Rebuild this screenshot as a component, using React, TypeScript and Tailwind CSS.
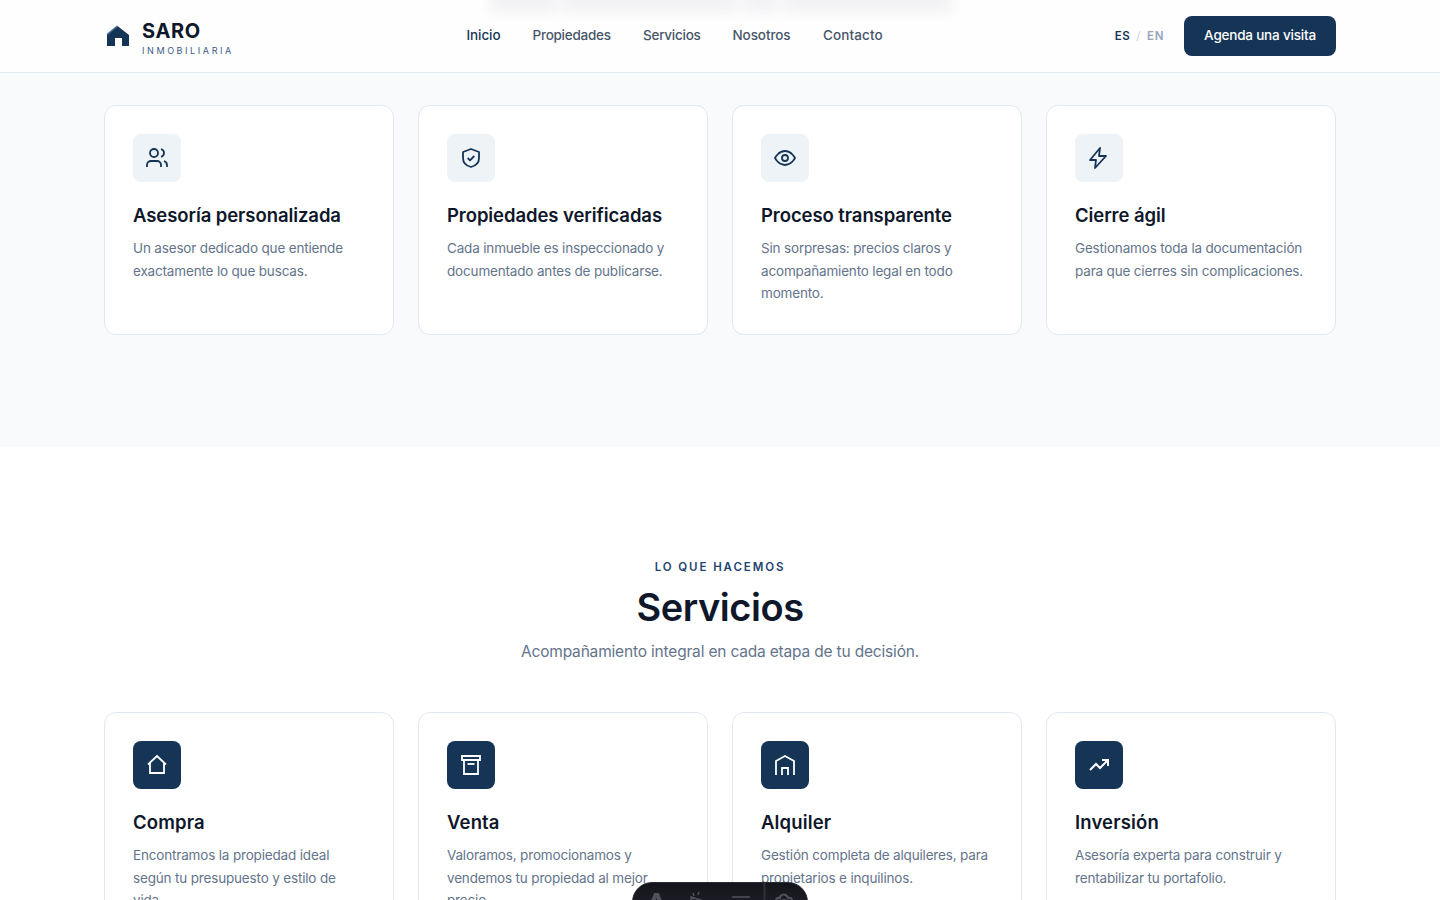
import React from "react";

const NAV = [
  { label: "Inicio", style: "w-[34px] text-[#163456]" },
  { label: "Propiedades", style: "w-[78.5px] tracking-[-0.25px] text-[#475569]" },
  { label: "Servicios", style: "w-[57.5px] tracking-[-0.25px] text-[#475569]" },
  { label: "Nosotros", style: "w-[58.5px] text-[#475569]" },
  { label: "Contacto", style: "tracking-[0.1px] text-[#475569]" },
];

const iconProps = {
  width: 24,
  height: 24,
  viewBox: "0 0 24 24",
  fill: "none",
  stroke: "currentColor",
  strokeWidth: 1.8,
};

function UsersIcon() {
  return (
    <svg {...iconProps}>
      <path d="M16 21v-2a4 4 0 0 0-4-4H6a4 4 0 0 0-4 4v2" />
      <circle cx="9" cy="7" r="4" />
      <path d="M22 21v-2a4 4 0 0 0-3-3.870M16 3.130a4 4 0 0 1 0 7.750" />
    </svg>
  );
}

function ShieldIcon() {
  return (
    <svg {...iconProps} strokeLinejoin="round">
      <path d="m12 3 8 3v6c0 4.500-3.200 7.800-8 9-4.800-1.200-8-4.500-8-9V6z" />
      <path d="m8.700 12 2.300 2.300 4.300-4.300" />
    </svg>
  );
}

function EyeIcon() {
  return (
    <svg {...iconProps} strokeLinejoin="round">
      <path d="M2 12s3.500-7 10-7 10 7 10 7-3.500 7-10 7S2 12 2 12z" />
      <circle cx="12" cy="12" r="3" />
    </svg>
  );
}

function BoltIcon() {
  return (
    <svg {...iconProps} strokeLinejoin="round">
      <path d="M13 2 3 14h6l-1 8 11-12h-7z" />
    </svg>
  );
}

function HomeIcon() {
  return (
    <svg {...iconProps}>
      <path d="m3 11.500 9-8.500 9 8.500" />
      <path d="M5 10v10h14V10" />
    </svg>
  );
}

function ArchiveIcon() {
  return (
    <svg {...iconProps}>
      <path d="M3 3h18v4H3z" />
      <path d="M5 7v14h14V7" />
      <path d="M8.500 11h7" />
    </svg>
  );
}

function GarageIcon() {
  return (
    <svg {...iconProps}>
      <path d="M3 22V8l9-5 9 5v14" />
      <path d="M9 22v-7h6v7" />
    </svg>
  );
}

function TrendIcon() {
  return (
    <svg {...iconProps} strokeWidth={2}>
      <path d="m3 17 6-6 4 4 8-8" />
      <path d="M15 7h6v6" />
    </svg>
  );
}

const BENEFITS = [
  {
    title: "Asesoría personalizada",
    lines: ["Un asesor dedicado que entiende", "exactamente lo que buscas."],
    icon: <UsersIcon />,
  },
  {
    title: "Propiedades verificadas",
    lines: ["Cada inmueble es inspeccionado y", "documentado antes de publicarse."],
    icon: <ShieldIcon />,
  },
  {
    title: "Proceso transparente",
    lines: ["Sin sorpresas: precios claros y", "acompañamiento legal en todo", "momento."],
    icon: <EyeIcon />,
  },
  {
    title: "Cierre ágil",
    lines: ["Gestionamos toda la documentación", "para que cierres sin complicaciones."],
    icon: <BoltIcon />,
  },
];

const SERVICES = [
  {
    title: "Compra",
    lines: ["Encontramos la propiedad ideal", "según tu presupuesto y estilo de", "vida."],
    icon: <HomeIcon />,
  },
  {
    title: "Venta",
    lines: ["Valoramos, promocionamos y", "vendemos tu propiedad al mejor", "precio."],
    icon: <ArchiveIcon />,
  },
  {
    title: "Alquiler",
    lines: ["Gestión completa de alquileres, para", "propietarios e inquilinos."],
    icon: <GarageIcon />,
  },
  {
    title: "Inversión",
    lines: ["Asesoría experta para construir y", "rentabilizar tu portafolio."],
    icon: <TrendIcon />,
  },
];

type CardProps = {
  title: string;
  lines: string[];
  icon: React.ReactNode;
  iconStyle: string;
  titleStyle: string;
};

function Card({ title, lines, icon, iconStyle, titleStyle }: CardProps) {
  return (
    <article className="rounded-xl border border-[#e2e8f0] bg-white p-7">
      <div className={`flex size-12 items-center justify-center rounded-lg ${iconStyle}`}>
        {icon}
      </div>
      <h3
        className={`mt-5 mb-[7px] text-[18.5px] leading-[27.75px] font-semibold whitespace-nowrap text-[#0f172a] ${titleStyle}`}
      >
        {title}
      </h3>
      <p className="text-[13.5px] leading-[22.75px] tracking-[-0.17px] whitespace-nowrap text-[#64748b]">
        {lines.map((line) => (
          <span key={line} className="block">
            {line}
          </span>
        ))}
      </p>
    </article>
  );
}

function Header() {
  return (
    <header className="relative h-[73px] shrink-0 overflow-hidden border-b border-[#e2e8f0] bg-[#fefefe]">
      {/* heading scrolled behind the translucent bar */}
      <div className="absolute -top-4 left-[490px] flex h-[29px] w-[462px] gap-1.5 opacity-5 blur-[7px]">
        <span className="w-[66px] bg-[#1e1b4b]" />
        <span className="w-[176px] bg-[#1e1b4b]" />
        <span className="w-[34px] bg-[#1e1b4b]" />
        <span className="flex-1 bg-[#1e1b4b]" />
      </div>
      <div className="relative mx-auto flex h-[72px] w-[1232px] items-center justify-between">
        <a className="flex w-[362.5px] items-center gap-2.5">
          <svg width="28" height="28" viewBox="0 0 28 28">
            <path d="M3 12.500 13.500 4 25 13v11h-7v-8h-7v8H3z" fill="#163456" />
            <path d="M3 12.500 13.500 4" stroke="#4a6c96" strokeWidth="1.500" />
          </svg>
          <span className="flex flex-col pt-1.5">
            <span className="text-[20px] leading-6 font-bold tracking-[0.6px] text-[#0f172a]">SARO</span>
            <span className="text-[9px] leading-[16px] tracking-[2.600px] text-[#3b5a85]">INMOBILIARIA</span>
          </span>
        </a>
        <nav className="flex flex-1 gap-8 pb-px text-[13.5px] font-medium tracking-[-0.1px]">
          {NAV.map((item) => (
            <a key={item.label} className={item.style}>
              {item.label}
            </a>
          ))}
        </nav>
        <div className="flex items-center gap-5">
          <div className="flex gap-1.5 pt-px text-[11.5px] font-semibold tracking-[0.6px] text-[#94a3b8]">
            <span className="text-[#163456]">ES</span>
            <span className="font-normal text-[#cbd5e1]">/</span>
            <span>EN</span>
          </div>
          <button className="h-10 w-[152px] rounded-lg bg-[#163456] pb-px text-[13.5px] font-medium tracking-[-0.2px] text-white">
            Agenda una visita
          </button>
        </div>
      </div>
    </header>
  );
}

function DevToolbar() {
  return (
    <div className="absolute top-[882px] left-[632px] flex h-10 w-44 rounded-[20px] border border-[#2b2d34] bg-linear-to-b from-[#13151a] to-[#25262e]">
      <svg width="174" height="38" viewBox="0 0 174 38" fill="none" stroke="#515257" strokeWidth="2">
        <path d="M19 21 22.500 12h2l3.500 9" strokeWidth="4" />
        <path d="m59 24-1-10 13 4M61 13l-1-3M65 12l1-3" strokeWidth="1.500" />
        <path d="M99 14h18M111 19h6" strokeWidth="1.500" />
        <path d="M131.500 0v38" stroke="#303138" />
        <path d="M144 20c-2-4 0-6 3-5 0-4 6-5 8 0 4-1 5 2 3 5" />
        <circle cx="151" cy="20" r="3" />
      </svg>
    </div>
  );
}

function App() {
  return (
    <div className="relative flex h-[900px] w-[1440px] flex-col overflow-hidden bg-white font-[Inter,sans-serif]">
      <Header />
      <section className="h-[374px] shrink-0 bg-[#f8fafc] pt-8">
        <div className="mx-auto grid h-[230px] w-[1232px] grid-cols-4 gap-6">
          {BENEFITS.map((item) => (
            <Card
              key={item.title}
              {...item}
              iconStyle="bg-[#edf3f7] text-[#163456]"
              titleStyle="tracking-[-0.08px]"
            />
          ))}
        </div>
      </section>
      <section className="shrink-0 pt-28">
        <div className="flex h-[153px] flex-col items-center">
          <p className="text-[11.5px] leading-4 font-semibold tracking-[1.9px] text-[#1e4470]">LO QUE HACEMOS</p>
          <h2 className="mt-[9px] text-[38px] leading-[46px] font-semibold tracking-[-0.45px] text-[#0f172a]">
            Servicios
          </h2>
          <p className="mt-[9.5px] text-[15.5px] leading-6 tracking-[-0.18px] text-[#64748b]">
            Acompañamiento integral en cada etapa de tu decisión.
          </p>
        </div>
        <div className="mx-auto grid w-[1232px] grid-cols-4 gap-6">
          {SERVICES.map((item) => (
            <Card
              key={item.title}
              {...item}
              iconStyle="bg-[#163456] text-white"
              titleStyle="tracking-[0.15px]"
            />
          ))}
        </div>
      </section>
      <DevToolbar />
    </div>
  );
}

export default App;
